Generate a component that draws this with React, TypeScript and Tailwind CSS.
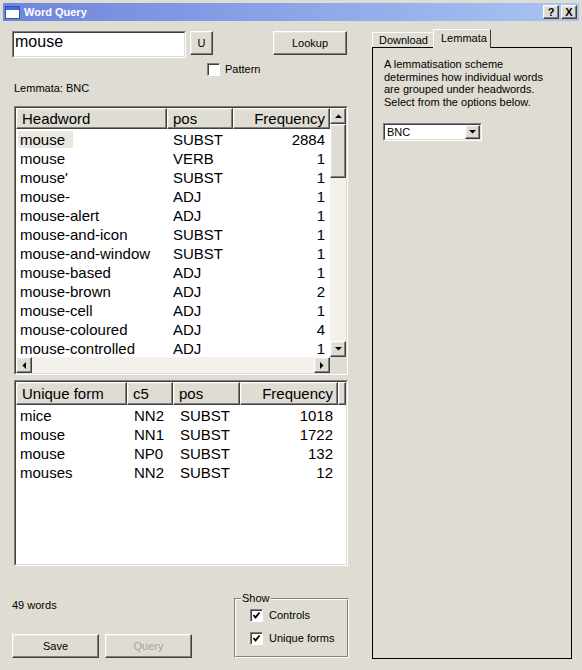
import type { ReactNode } from 'react';

const FONT = "font-['Liberation_Sans',Arial,sans-serif]";
const RAISED =
  'border border-t-white border-l-white border-r-[#404040] border-b-[#404040] shadow-[inset_-1px_-1px_0_#808080,inset_1px_1px_0_#e8e6e0] bg-[#dfdcd3]';

const headwords: [string, string, number][] = [
  ['mouse', 'SUBST', 2884],
  ['mouse', 'VERB', 1],
  ["mouse'", 'SUBST', 1],
  ['mouse-', 'ADJ', 1],
  ['mouse-alert', 'ADJ', 1],
  ['mouse-and-icon', 'SUBST', 1],
  ['mouse-and-window', 'SUBST', 1],
  ['mouse-based', 'ADJ', 1],
  ['mouse-brown', 'ADJ', 2],
  ['mouse-cell', 'ADJ', 1],
  ['mouse-coloured', 'ADJ', 4],
  ['mouse-controlled', 'ADJ', 1],
];

const forms: [string, string, string, number][] = [
  ['mice', 'NN2', 'SUBST', 1018],
  ['mouse', 'NN1', 'SUBST', 1722],
  ['mouse', 'NP0', 'SUBST', 132],
  ['mouses', 'NN2', 'SUBST', 12],
];

function Arrow({ dir }: { dir: 'up' | 'down' | 'left' | 'right' }) {
  const pts = {
    up: '0,4 7,4 3.5,0.5',
    down: '0,0 7,0 3.5,3.5',
    left: '4,0 4,7 0.5,3.5',
    right: '0,0 0,7 3.5,3.5',
  }[dir];
  const vertical = dir === 'up' || dir === 'down';
  return (
    <svg width={vertical ? 7 : 4} height={vertical ? 4 : 7} className="block">
      <polygon points={pts} fill="#000" />
    </svg>
  );
}

function ScrollButton({ dir }: { dir: 'up' | 'down' | 'left' | 'right' }) {
  return (
    <div className={`${RAISED} w-[16px] h-[16px] shrink-0 flex items-center justify-center`}>
      <Arrow dir={dir} />
    </div>
  );
}

function Check({ checked }: { checked?: boolean }) {
  return (
    <span className="relative block w-[13px] h-[13px] shrink-0 border border-t-[#808080] border-l-[#808080] border-r-white border-b-white bg-white shadow-[inset_1px_1px_0_#404040]">
      {checked && (
        <svg width="9" height="9" className="absolute left-[1px] top-[1px]">
          <polyline points="1.5,4 3.5,6.5 7.5,1.5" fill="none" stroke="#000" strokeWidth="1.8" />
        </svg>
      )}
    </span>
  );
}

function Sunken({ className, children }: { className: string; children: ReactNode }) {
  return (
    <div className={`border border-t-[#808080] border-l-[#808080] border-r-white border-b-white ${className}`}>
      <div className="w-full h-full border border-t-[#404040] border-l-[#404040] border-r-[#dfdcd3] border-b-[#dfdcd3] bg-white flex flex-col overflow-hidden">
        {children}
      </div>
    </div>
  );
}

function HeaderCell({ w, right, children }: { w: string; right?: boolean; children?: ReactNode }) {
  return (
    <div
      className={`${RAISED} ${w} h-full shrink-0 flex items-center ${right ? 'justify-end pr-[4px]' : 'pl-[5px]'} text-[15px] leading-none`}
    >
      {children}
    </div>
  );
}

function Button({ className, disabled, children }: { className: string; disabled?: boolean; children: ReactNode }) {
  return (
    <div
      className={`${RAISED} ${className} flex items-center justify-center text-[11px] ${disabled ? 'text-[#a7a49c]' : 'text-black'}`}
    >
      {children}
    </div>
  );
}

function TitleBar() {
  return (
    <div className="h-[18px] flex items-center bg-gradient-to-r from-[#6f85dc] to-[#aac4f2] pl-[2px] pr-[2px]">
      <svg width="15" height="13" className="block">
        <rect x="0.5" y="0.5" width="14" height="12" fill="#fff" stroke="#3a4fa8" />
        <rect x="1" y="1" width="13" height="3" fill="#3d6ce0" />
      </svg>
      <span className="ml-[4px] text-[11px] font-bold text-white">Word Query</span>
      <div className="ml-auto flex gap-[2px]">
        <div className={`${RAISED} w-[16px] h-[14px] flex items-center justify-center text-[11px] font-bold leading-none`}>?</div>
        <div className={`${RAISED} w-[16px] h-[14px] flex items-center justify-center text-[11px] font-bold leading-none`}>X</div>
      </div>
    </div>
  );
}

function HeadwordList() {
  return (
    <Sunken className="w-[334px] h-[269px] ml-[2px] mt-[11px]">
      <div className="flex h-[249px]">
        <div className="flex flex-col w-[314px]">
          <div className="flex h-[21px] shrink-0">
            <HeaderCell w="w-[151px]">Headword</HeaderCell>
            <HeaderCell w="w-[66px]">pos</HeaderCell>
            <HeaderCell w="w-[97px]" right>
              Frequency
            </HeaderCell>
          </div>
          <div className="pt-[2px] overflow-hidden text-[15px]">
            {headwords.map(([word, pos, freq], i) => (
              <div key={i} className="flex h-[19px] items-center">
                <div className="w-[151px] pl-[4px]">
                  <span className={i === 0 ? 'bg-[#ebe8e0] px-[2px] -ml-[2px] pr-[8px]' : ''}>{word}</span>
                </div>
                <div className="w-[66px] pl-[6px]">{pos}</div>
                <div className="w-[92px] text-right">{freq}</div>
              </div>
            ))}
          </div>
        </div>
        <div className="w-[16px] flex flex-col bg-[#f3f1ea]">
          <ScrollButton dir="up" />
          <div className={`${RAISED} h-[54px]`} />
          <div className="flex-1" />
          <ScrollButton dir="down" />
        </div>
      </div>
      <div className="flex h-[16px]">
        <div className="flex w-[314px] bg-[#f3f1ea]">
          <ScrollButton dir="left" />
          <div className="flex-1" />
          <ScrollButton dir="right" />
        </div>
        <div className="w-[16px] bg-[#dfdcd3]" />
      </div>
    </Sunken>
  );
}

function FormsList() {
  return (
    <Sunken className="w-[334px] h-[186px] ml-[2px] mt-[5px]">
      <div className="flex h-[23px] shrink-0">
        <HeaderCell w="w-[111px]">Unique form</HeaderCell>
        <HeaderCell w="w-[46px]">c5</HeaderCell>
        <HeaderCell w="w-[67px]">pos</HeaderCell>
        <HeaderCell w="w-[98px]" right>
          Frequency
        </HeaderCell>
        <div className={`${RAISED} flex-1`} />
      </div>
      <div className="pt-[2px] text-[15px]">
        {forms.map(([form, c5, pos, freq], i) => (
          <div key={i} className="flex h-[19px] items-center">
            <div className="w-[111px] pl-[4px]">{form}</div>
            <div className="w-[46px] pl-[7px]">{c5}</div>
            <div className="w-[67px] pl-[7px]">{pos}</div>
            <div className="w-[93px] text-right">{freq}</div>
          </div>
        ))}
      </div>
    </Sunken>
  );
}

export default function App() {
  return (
    <div className={`w-[582px] h-[670px] bg-[#dfdcd3] p-[3px] flex flex-col text-black ${FONT}`}>
      <TitleBar />
      <div className="flex flex-1">
        <div className="w-[346px] pl-[9px] pt-[10px] flex flex-col">
          <div className="flex items-start">
            <div className="w-[174px] h-[27px] border border-t-[#808080] border-l-[#808080] border-r-white border-b-white">
              <div className="w-full h-full bg-white border border-t-[#404040] border-l-[#404040] border-r-[#dfdcd3] border-b-[#dfdcd3] pl-[1px] text-[16px] leading-[18px]">
                mouse
              </div>
            </div>
            <Button className="ml-[4px] w-[23px] h-[24px]">U</Button>
            <Button className="ml-[60px] w-[74px] h-[24px]">Lookup</Button>
          </div>
          <div className="mt-[5px] ml-[195px] flex items-center gap-[5px] text-[11px] leading-[13px]">
            <Check />
            <span>Pattern</span>
          </div>
          <div className="mt-[6px] ml-[2px] text-[11px] leading-[13px]">Lemmata: BNC</div>
          <HeadwordList />
          <FormsList />
          <div className="mt-[32px] flex items-start">
            <div className="flex flex-col">
              <div className="pt-[1px] text-[11px] leading-[13px]">49 words</div>
              <div className="mt-[22px] flex">
                <Button className="w-[87px] h-[24px]">Save</Button>
                <Button className="ml-[6px] w-[87px] h-[24px]" disabled>
                  Query
                </Button>
              </div>
            </div>
            <div className="relative ml-[42px] w-[116px] h-[60px] border border-t-[#808080] border-l-[#808080] border-r-white border-b-white">
              <div className="w-full h-full border border-t-white border-l-white border-r-[#808080] border-b-[#808080] pl-[14px] pt-[9px] text-[11px] leading-[13px]">
                <div className="flex items-center gap-[6px]">
                  <Check checked />
                  <span>Controls</span>
                </div>
                <div className="mt-[10px] flex items-center gap-[6px]">
                  <Check checked />
                  <span>Unique forms</span>
                </div>
              </div>
              <span className="absolute -top-[7px] left-[6px] bg-[#dfdcd3] px-[1px] text-[11px] leading-[13px]">Show</span>
            </div>
          </div>
        </div>
        <div className="ml-[23px] pt-[7px] flex flex-col">
          <div className="flex items-end h-[19px]">
            <div className="h-[15px] w-[61px] border-t border-l border-t-white border-l-white pl-[6px] text-[11px] leading-[14px]">
              Download
            </div>
            <div className="relative z-10 -mb-px h-[19px] w-[58px] border-t border-l border-r border-t-white border-l-white border-r-[#404040] bg-[#dfdcd3] pl-[7px] pt-[1px] text-[11px] leading-[14px]">
              Lemmata
            </div>
          </div>
          <div className="w-[200px] h-[612px] border border-black pl-[11px] pt-[10px]">
            <p className="text-[11px] leading-[12.5px]">
              A lemmatisation scheme
              <br />
              determines how individual words
              <br />
              are grouped under headwords.
              <br />
              Select from the options below.
            </p>
            <div className="mt-[15px] -ml-[1px] w-[99px] h-[18px] border border-t-[#808080] border-l-[#808080] border-r-white border-b-white">
              <div className="w-full h-full bg-white border border-t-[#404040] border-l-[#404040] border-r-[#dfdcd3] border-b-[#dfdcd3] flex items-center">
                <span className="pl-[2px] text-[11px] leading-none flex-1">BNC</span>
                <div className={`${RAISED} w-[15px] h-full flex items-center justify-center`}>
                  <Arrow dir="down" />
                </div>
              </div>
            </div>
          </div>
        </div>
      </div>
    </div>
  );
}
